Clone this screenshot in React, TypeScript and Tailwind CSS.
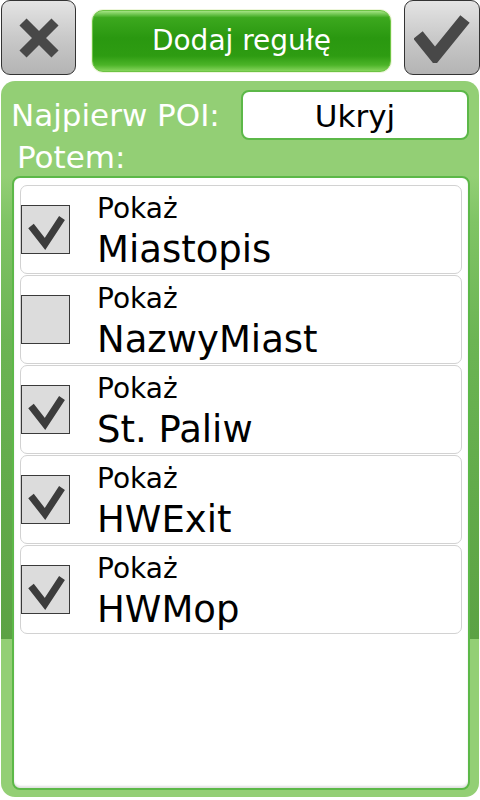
import React from "react";

const items = [
  { name: "Miastopis", checked: true },
  { name: "NazwyMiast", checked: false },
  { name: "St. Paliw", checked: true },
  { name: "HWExit", checked: true },
  { name: "HWMop", checked: true },
];

function CheckBox({ checked }: { checked: boolean }) {
  return (
    <div className="w-[49px] h-[49px] shrink-0 bg-[#dcdcdc] border border-[#3a3a3a]">
      {checked && (
        <svg width="47" height="47" viewBox="0 0 47 47">
          <polyline
            points="9,20 23,38 40,12"
            fill="none"
            stroke="#3c3c3c"
            strokeWidth="7"
            strokeLinejoin="miter"
          />
        </svg>
      )}
    </div>
  );
}

export default function App() {
  return (
    <div
      className="w-[480px] h-[800px] bg-white flex flex-col overflow-hidden"
      style={{ fontFamily: '"DejaVu Sans", Verdana, sans-serif' }}
    >
      {/* Top bar */}
      <div className="h-[81px] flex items-start shrink-0">
        <button className="ml-px w-[75px] h-[75px] rounded-[9px] border border-[#333] bg-[linear-gradient(to_bottom,#e4e4e4,#c9c9c9_50%,#b4b4b4)] flex items-center justify-center">
          <svg width="40" height="40" viewBox="0 0 40 40">
            <path d="M4 4 L36 36 M36 4 L4 36" stroke="#484848" strokeWidth="10" />
          </svg>
        </button>
        <div className="ml-[15px] mt-[9px] rounded-[12px] p-px bg-[#eef6dc]">
          <div className="w-[299px] h-[62px] rounded-[11px] border border-[#6cc444] bg-[linear-gradient(to_bottom,#a4e484_0%,#3ca81e_11%,#2a9810_45%,#2e9c12_75%,#4cb428_90%,#86d45c_100%)] flex items-center justify-center">
            <span className="text-white text-[28px] leading-[28px]">Dodaj regułę</span>
          </div>
        </div>
        <button className="ml-auto w-[76px] h-[75px] rounded-[9px] border border-[#333] bg-[linear-gradient(to_bottom,#e4e4e4,#c9c9c9_50%,#b4b4b4)] flex items-center justify-center">
          <svg width="56" height="50" viewBox="0 0 56 50">
            <polyline points="4,22 21,43 51,6" fill="none" stroke="#484848" strokeWidth="12" />
          </svg>
        </button>
      </div>

      {/* Panel */}
      <div className="ml-px mr-px h-[716px] rounded-[14px] flex flex-col bg-[linear-gradient(to_bottom,#93cf75_95px,#80c465_140px,#6cb454_260px,#62aa4a_420px,#5ca244_558px,#93cf75_558px)]">
        <div className="flex items-center pt-[9px]">
          <span className="pl-[10px] text-white text-[31px] leading-[31px]">Najpierw POI:</span>
          <div className="ml-auto mr-[10px] w-[228px] h-[50px] rounded-[8px] border-2 border-[#5cb848] bg-white flex items-center justify-center pt-[3px]">
            <span className="text-black text-[31px] leading-[31px]">Ukryj</span>
          </div>
        </div>
        <div className="pl-[16px] mt-[2px] text-white text-[31px] leading-[31px]">Potem:</div>
        <div className="mt-[3px] ml-[11px] mr-[9px] mb-[7px] flex-1 rounded-[8px] border-2 border-[#5cb848] bg-white px-[6px] pt-[7px] flex flex-col gap-px shadow-[inset_0_-2px_2px_rgba(0,0,0,0.12)]">
          {items.map((it) => (
            <div
              key={it.name}
              className="h-[89px] shrink-0 rounded-[7px] border border-[#d2d2d2] flex items-center"
            >
              <CheckBox checked={it.checked} />
              <div className="ml-[27px] self-start pt-[9px] flex flex-col">
                <span className="text-black text-[28px] leading-[28px]">Pokaż</span>
                <span className="mt-[8px] text-black text-[37px] leading-[37px]">{it.name}</span>
              </div>
            </div>
          ))}
        </div>
      </div>
    </div>
  );
}
